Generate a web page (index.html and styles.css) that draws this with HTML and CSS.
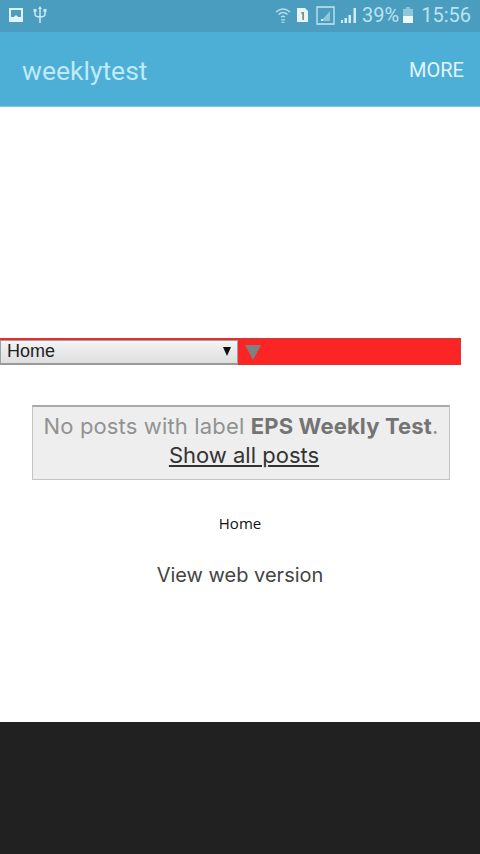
FILE: index.html
```html
<!DOCTYPE html>
<html lang="en">
<head>
<meta charset="utf-8">
<title>weeklytest</title>
<link rel="stylesheet" href="styles.css">
</head>
<body>
<div class="screen">
  <div class="status">
    <div class="status-left">
      <svg class="ic" width="16" height="16" viewBox="0 0 16 16"><path fill="none" stroke="#dff3fa" stroke-width="2" d="M2 2h12v12H2z"/><path fill="#dff3fa" d="M3 10h3l1-1.500h2l1 1.500h3v3H3z"/></svg>
      <svg class="ic" width="14" height="18" viewBox="0 0 14 18"><path fill="none" stroke="#c8eaf5" stroke-width="1.500" d="M7 2v15M2 5v3q0 3 5 3 5 0 5-3V5"/><path fill="#c8eaf5" d="M7 0l2 3H5zM0.500 3h3v3h-3zM10.500 3h3v3h-3z"/></svg>
    </div>
    <div class="status-right">
      <svg class="ic" width="16" height="18" viewBox="0 0 16 18"><path fill="none" stroke="#b4dfee" stroke-width="1.500" d="M1 6q7-6 14 0M3.500 8.500q4.500-4 9 0M6 11q2-1.500 4 0"/><path fill="#9ccfe2" d="M6 13h4v1.500H6zM6.500 15.500h3V17h-3z"/></svg>
      <svg class="ic sim" width="13" height="16" viewBox="0 0 13 16"><path fill="#e6f5fa" d="M1 1h8l3 3v11H1z"/><path fill="#8a8a80" d="M5.500 5H8v8H6.300V6.800H5z"/></svg>
      <svg class="ic image-ic" width="19" height="19" viewBox="0 0 19 19"><path fill="none" stroke="#c4e6f2" stroke-width="1.300" d="M1 1h17v17H1z"/><path fill="#8fc6da" d="M5 15L14 5v10z"/><path fill="#d8f0f8" d="M5 13h2v2H5z"/></svg>
      <svg class="ic signal" width="16" height="15" viewBox="0 0 16 15"><path fill="#d0edf6" d="M0 12h2v3H0zM3.500 10H6v5H3.500zM7.500 7H10v8H7.500zM12.500 0H15v15h-2.500z"/></svg>
      <span class="batt-text">39%</span>
      <svg class="ic" width="10" height="16" viewBox="0 0 10 16"><path fill="#8fc6da" d="M3 0h4v2h3v14H0V2h3z"/><path fill="#eef8fb" d="M0 9h10v7H0z"/></svg>
      <span class="clock">15:56</span>
    </div>
  </div>
  <header class="appbar">
    <span class="app-title">weeklytest</span>
    <span class="more">MORE</span>
  </header>
  <main class="content">
    <div class="select-bar">
      <div class="select">
        <span>Home</span>
        <span class="select-arrow"></span>
      </div>
      <span class="filter-arrow"></span>
    </div>
    <div class="notice">
      <span class="notice-line">No posts with label <b>EPS Weekly Test</b>.</span><br>
      <a class="show-all" href="#">Show all posts</a>
    </div>
    <div class="home-link">Home</div>
    <div class="web-link">View web version</div>
  </main>
  <footer class="footer"></footer>
</div>
</body>
</html>
```

FILE: styles.css
```css
* { box-sizing: border-box; }
html, body { margin: 0; padding: 0; }
body { width: 480px; height: 854px; overflow: hidden; background: #fff; }
.screen { width: 480px; height: 854px; display: flex; flex-direction: column; }
.status {
  height: 32px;
  background: #4a9dbe;
  display: flex;
  justify-content: space-between;
  align-items: center;
  padding: 0 9px 2px 8px;
  font-family: Roboto, sans-serif;
}
.status-left { display: flex; align-items: center; gap: 9px; }
.status-right { display: flex; align-items: center; gap: 4px; }
.ic { display: block; flex: none; }
.sim { margin-left: 1px; }
.image-ic { margin-left: 3px; }
.signal { margin-left: 2px; }
.batt-text { font-size: 20px; color: #b9e4f2; margin-left: 1px; }
.clock { font-size: 20px; color: #b9e4f2; margin-left: 4px; }
.appbar {
  height: 75px;
  background: #4daed6;
  border-bottom: 1px solid #8cc4da;
  display: flex;
  justify-content: space-between;
  align-items: center;
  padding: 3px 16px 0 22px;
  font-family: Roboto, sans-serif;
}
.app-title { font-size: 26.500px; color: #bfeaf8; }
.more { font-size: 20px; color: #e0f5fb; margin-bottom: 2px; }
.content { flex: 1; padding-top: 231px; font-family: Inter, sans-serif; text-align: center; }
.select-bar {
  width: 461px;
  height: 27px;
  background: #fb2525;
  border-top: 2px solid #e23030;
  border-bottom: 1px solid #c93a3a;
  border-right: 1px solid #d83434;
  display: flex;
  align-items: center;
}
.select {
  width: 238px;
  height: 25px;
  background: linear-gradient(#f4f4f4, #dedede);
  border: 1px solid #a0a0a0;
  border-bottom: 2px solid #999;
  display: flex;
  justify-content: space-between;
  align-items: center;
  padding: 0 6px 0 6px;
  font-family: "Liberation Sans", sans-serif;
  font-size: 18px;
  color: #222;
}
.select-arrow { width: 0; height: 0; border-left: 4px solid transparent; border-right: 4px solid transparent; border-top: 9px solid #111; }
.filter-arrow { margin-left: 7px; width: 0; height: 0; border-left: 8px solid transparent; border-right: 8px solid transparent; border-top: 15px solid #808080; }
.notice {
  width: 418px;
  height: 75px;
  margin: 40px 0 0 32px;
  background: #eee;
  border: 1px solid #c4c4c4;
  border-top: 2px solid #aaa;
  font-size: 22px;
  line-height: 29px;
  color: #929292;
  padding-top: 5px;
  white-space: nowrap;
}
.notice-line { letter-spacing: 0.150px; }
.notice b { color: #747474; font-weight: 700; }
.show-all { color: #333; text-decoration: underline; margin-left: 6px; }
.home-link { margin-top: 33px; font-family: "Open Sans", sans-serif; font-size: 15px; line-height: 20px; color: #111; }
.web-link { margin-top: 30px; font-size: 20px; line-height: 24px; color: #444; }
.footer { height: 132px; background: #212121; }
```
